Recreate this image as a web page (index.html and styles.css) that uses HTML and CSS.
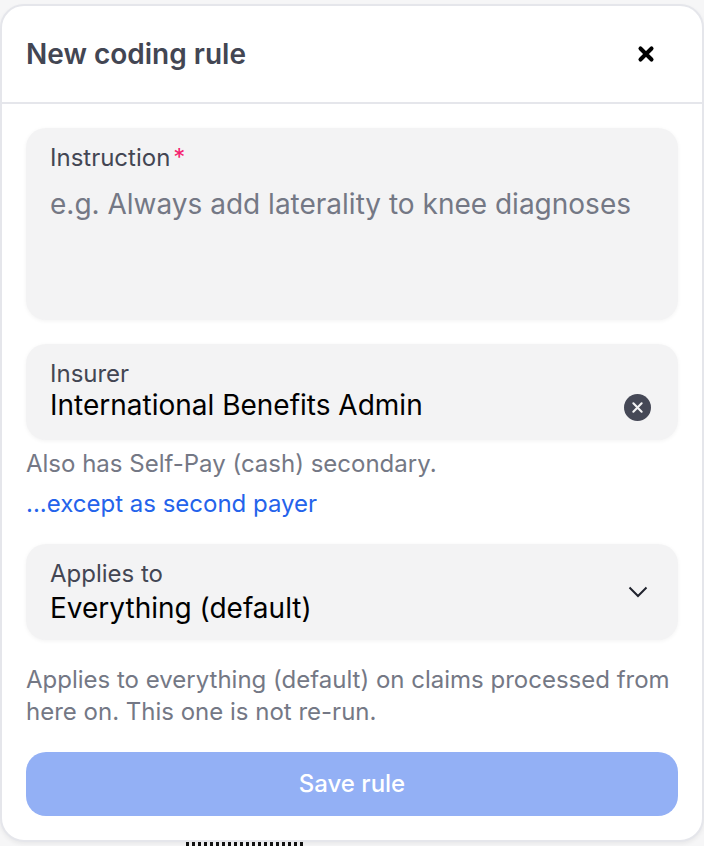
FILE: index.html
```html
<!DOCTYPE html>
<html>
<head>
 <meta charset="utf-8"/>
 <title>New coding rule</title>
 <link rel="stylesheet" href="styles.css">
</head>
<body>
<div class="card">
 <div class="header">
  <h2 class="title">New coding rule</h2>
  <svg class="close" width="20" height="20" viewBox="0 0 20 20"><path d="M4 4L16 16M16 4L4 16" stroke="#000" stroke-width="4.4" stroke-linecap="round" fill="none" transform="translate(10 10) scale(.92) translate(-10 -10)"/></svg>
 </div>
 <div class="content">
  <div class="field field-instruction">
   <div class="label">Instruction<span class="req">*</span></div>
   <div class="placeholder">e.g. Always add laterality to knee diagnoses</div>
  </div>
  <div class="field field-insurer">
   <div class="label">Insurer</div>
   <div class="value-row">
    <div class="value">International Benefits Admin</div>
    <svg class="clear" width="27" height="27" viewBox="0 0 26 26"><circle cx="13" cy="13" r="13" fill="#454856"/><path d="M9 9L17 17M17 9L9 17" stroke="#f3f3f4" stroke-width="2" stroke-linecap="round" fill="none"/></svg>
   </div>
  </div>
  <p class="hint hint-secondary">Also has Self-Pay (cash) secondary.</p>
  <a class="link">...except as second payer</a>
  <div class="field field-applies">
   <div class="applies-text">
    <div class="label">Applies to</div>
    <div class="value value-applies">Everything (default)</div>
   </div>
   <svg class="chevron" width="20" height="12" viewBox="0 0 20 12"><path d="M1.5 1.5L10 10L18.5 1.5" stroke="#20232e" stroke-width="2" fill="none"/></svg>
  </div>
  <p class="hint hint-applies">Applies to everything (default) on claims processed from here on. This one is not re-run.</p>
  <button class="save">Save rule</button>
 </div>
</div>
<div class="dots"></div>
</body>
</html>
```

FILE: styles.css
```css
html, body {
 margin: 0;
 height: 846px;
 overflow: hidden;
 background: #f6f6f7;
}
body {
 font-family: "Inter", "Liberation Sans", sans-serif;
 padding: 4px 0 0 0;
 box-sizing: border-box;
}
.card {
 height: 838px;
 box-sizing: border-box;
 background: #fff;
 border: 2px solid #e5e6eb;
 border-radius: 24px;
 box-shadow: 0 2px 4px rgba(0,0,0,.06);
 display: flex;
 flex-direction: column;
}
.header {
 height: 98px;
 flex: none;
 box-sizing: border-box;
 border-bottom: 2px solid #e5e6eb;
 display: flex;
 align-items: center;
 justify-content: space-between;
 padding: 0 46px 0 24px;
}
.title {
 margin: 0;
 font-size: 28px;
 font-weight: 600;
 color: #434653;
}
.close { flex: none; }
.content {
 padding: 24px 24px 0 24px;
 display: flex;
 flex-direction: column;
}
.field {
 background: #f3f3f4;
 border-radius: 20px;
 box-shadow: 0 1px 4px rgba(0,0,0,.05);
 padding: 0 24px;
 box-sizing: border-box;
}
.field-instruction { height: 192px; padding-top: 16px; }
.field-insurer { height: 96px; margin-top: 24px; padding-top: 16px; }
.field-applies {
 height: 96px;
 margin-top: 24px;
 display: flex;
 align-items: center;
 justify-content: space-between;
}
.label {
 font-size: 24px;
 line-height: 28px;
 color: #434653;
}
.req { color: #f5216e; margin-left: 3px; }
.placeholder {
 font-size: 28px;
 line-height: 36px;
 margin-top: 14px;
 color: #747885;
}
.value-row {
 display: flex;
 align-items: flex-start;
 justify-content: space-between;
}
.value {
 font-size: 28px;
 line-height: 34px;
 color: #000;
}
.value-applies { margin-top: 3px; }
.clear { flex: none; margin: 6px 3px 0 0; }
.chevron { flex: none; margin-right: 6px; }
.hint {
 margin: 0;
 font-size: 24px;
 color: #747885;
}
.hint-secondary { margin-top: 7px; line-height: 34px; }
.hint-applies { margin-top: 24px; line-height: 32px; }
.link {
 display: block;
 margin-top: 6px;
 font-size: 24px;
 line-height: 33px;
 color: #2463eb;
}
.save {
 margin-top: 24px;
 height: 64px;
 border: 0;
 border-radius: 20px;
 padding: 0 0 2px 0;
 background: #93b0f5;
 color: #fff;
 font-family: inherit;
 font-size: 24px;
 font-weight: 500;
}
.dots {
 width: 118px;
 height: 4px;
 margin: 0 0 0 186px;
 background: repeating-linear-gradient(90deg, #111 0 3px, transparent 3px 6px);
}
```
